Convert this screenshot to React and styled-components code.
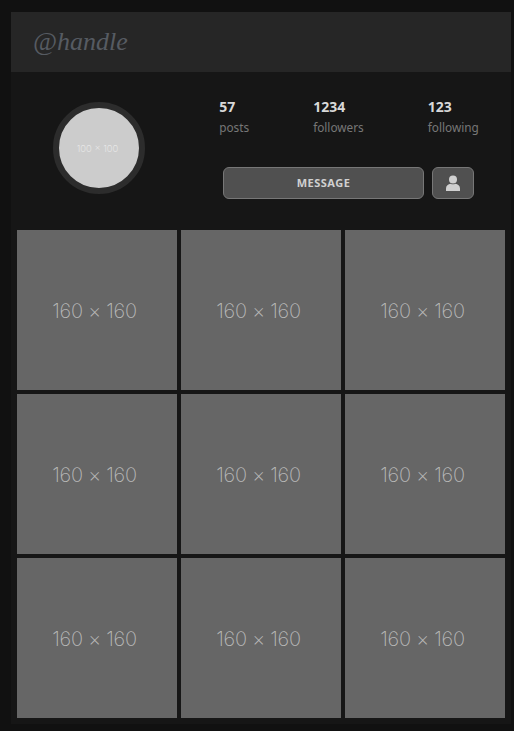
import React from "react";
import styled, { createGlobalStyle } from "styled-components";

const stats = [
  { value: "57", label: "posts" },
  { value: "1234", label: "followers" },
  { value: "123", label: "following" },
];

const App = () => {
  return (
    <Page>
      <GlobalStyle />
      <Card>
        <Header>
          <Handle>@handle</Handle>
        </Header>
        <Profile>
          <AvatarColumn>
            <Avatar>
              <AvatarText>100 × 100</AvatarText>
            </Avatar>
          </AvatarColumn>
          <Details>
            <Stats>
              {stats.map((item) => (
                <Stat key={item.label}>
                  <StatValue>{item.value}</StatValue>
                  <StatLabel>{item.label}</StatLabel>
                </Stat>
              ))}
            </Stats>
            <Actions>
              <MessageButton>MESSAGE</MessageButton>
              <IconButton aria-label="profile">
                <svg width="16" height="16" viewBox="0 0 16 16" fill="currentColor">
                  <circle cx="8" cy="4.6" r="4" />
                  <path d="M1 16v-2.6C1 10.6 3.2 9.2 5.6 8.7c1.4.8 3.4.8 4.8 0 2.4.5 4.6 1.9 4.6 4.7V16z" />
                </svg>
              </IconButton>
            </Actions>
          </Details>
        </Profile>
        <Gallery>
          {Array.from({ length: 9 }, (_, key) => (
            <Tile key={key}>160 × 160</Tile>
          ))}
        </Gallery>
      </Card>
    </Page>
  );
};

const GlobalStyle = createGlobalStyle`
  html, body {
    margin: 0;
    background-color: #111111;
  }
`;

const Page = styled.div`
  box-sizing: border-box;
  min-height: 731px;
  padding: 12px 3px 0 11px;
  font-family: "Noto Sans", sans-serif;
`;

const Card = styled.main`
  width: 500px;
  height: 712px;
  background-color: #161616;
`;

const Header = styled.header`
  box-sizing: border-box;
  height: 60px;
  padding-left: 22px;
  display: flex;
  align-items: center;
  background-color: #262626;
`;

const Handle = styled.h1`
  margin: 0;
  font-family: "Liberation Serif", serif;
  font-style: italic;
  font-weight: 400;
  font-size: 26px;
  color: #565b62;
`;

const Profile = styled.section`
  height: 158px;
  display: grid;
  grid-template-columns: 176px 323px;
`;

const AvatarColumn = styled.div`
  display: flex;
  justify-content: center;
  padding-top: 30px;
`;

const Avatar = styled.div`
  width: 80px;
  height: 80px;
  border: 6px solid #2c2c2c;
  border-radius: 50%;
  background-color: #cccccc;
  display: flex;
  align-items: center;
  justify-content: center;
`;

const AvatarText = styled.span`
  padding-right: 3px;
  font-family: Inter, sans-serif;
  font-weight: 200;
  font-size: 9.5px;
  color: #f0f0f0;
`;

const Details = styled.div`
  display: flex;
  flex-direction: column;
  align-items: center;
  padding-top: 26px;
`;

const Stats = styled.div`
  display: flex;
  gap: 64px;
  padding-left: 1px;
`;

const Stat = styled.div`
  display: flex;
  flex-direction: column;
  gap: 2px;
`;

const StatValue = styled.strong`
  font-size: 14px;
  line-height: 18px;
  font-weight: 700;
  color: #d8d8d8;
`;

const StatLabel = styled.span`
  font-size: 11.8px;
  line-height: 18px;
  color: #777777;
`;

const Actions = styled.div`
  display: flex;
  gap: 8px;
  margin-top: 31px;
`;

const Button = styled.button`
  box-sizing: border-box;
  height: 32px;
  padding: 0;
  display: flex;
  align-items: center;
  justify-content: center;
  background-color: #505050;
  border: 1px solid #777777;
  border-radius: 6px;
  color: #d0d0d0;
`;

const MessageButton = styled(Button)`
  width: 201px;
  padding-bottom: 2px;
  font-family: "Noto Sans", sans-serif;
  font-size: 11px;
  font-weight: 700;
  letter-spacing: 0.5px;
`;

const IconButton = styled(Button)`
  width: 42px;
`;

const Gallery = styled.section`
  display: grid;
  grid-template-columns: repeat(3, 160px);
  grid-auto-rows: 160px;
  gap: 4px;
  padding-left: 6px;
`;

const Tile = styled.div`
  display: flex;
  align-items: center;
  justify-content: center;
  padding: 1px 5px 0 0;
  background-color: #666666;
  font-family: Inter, sans-serif;
  font-weight: 200;
  font-size: 20px;
  letter-spacing: -0.25px;
  color: #b8b8b8;
`;

export default App;
